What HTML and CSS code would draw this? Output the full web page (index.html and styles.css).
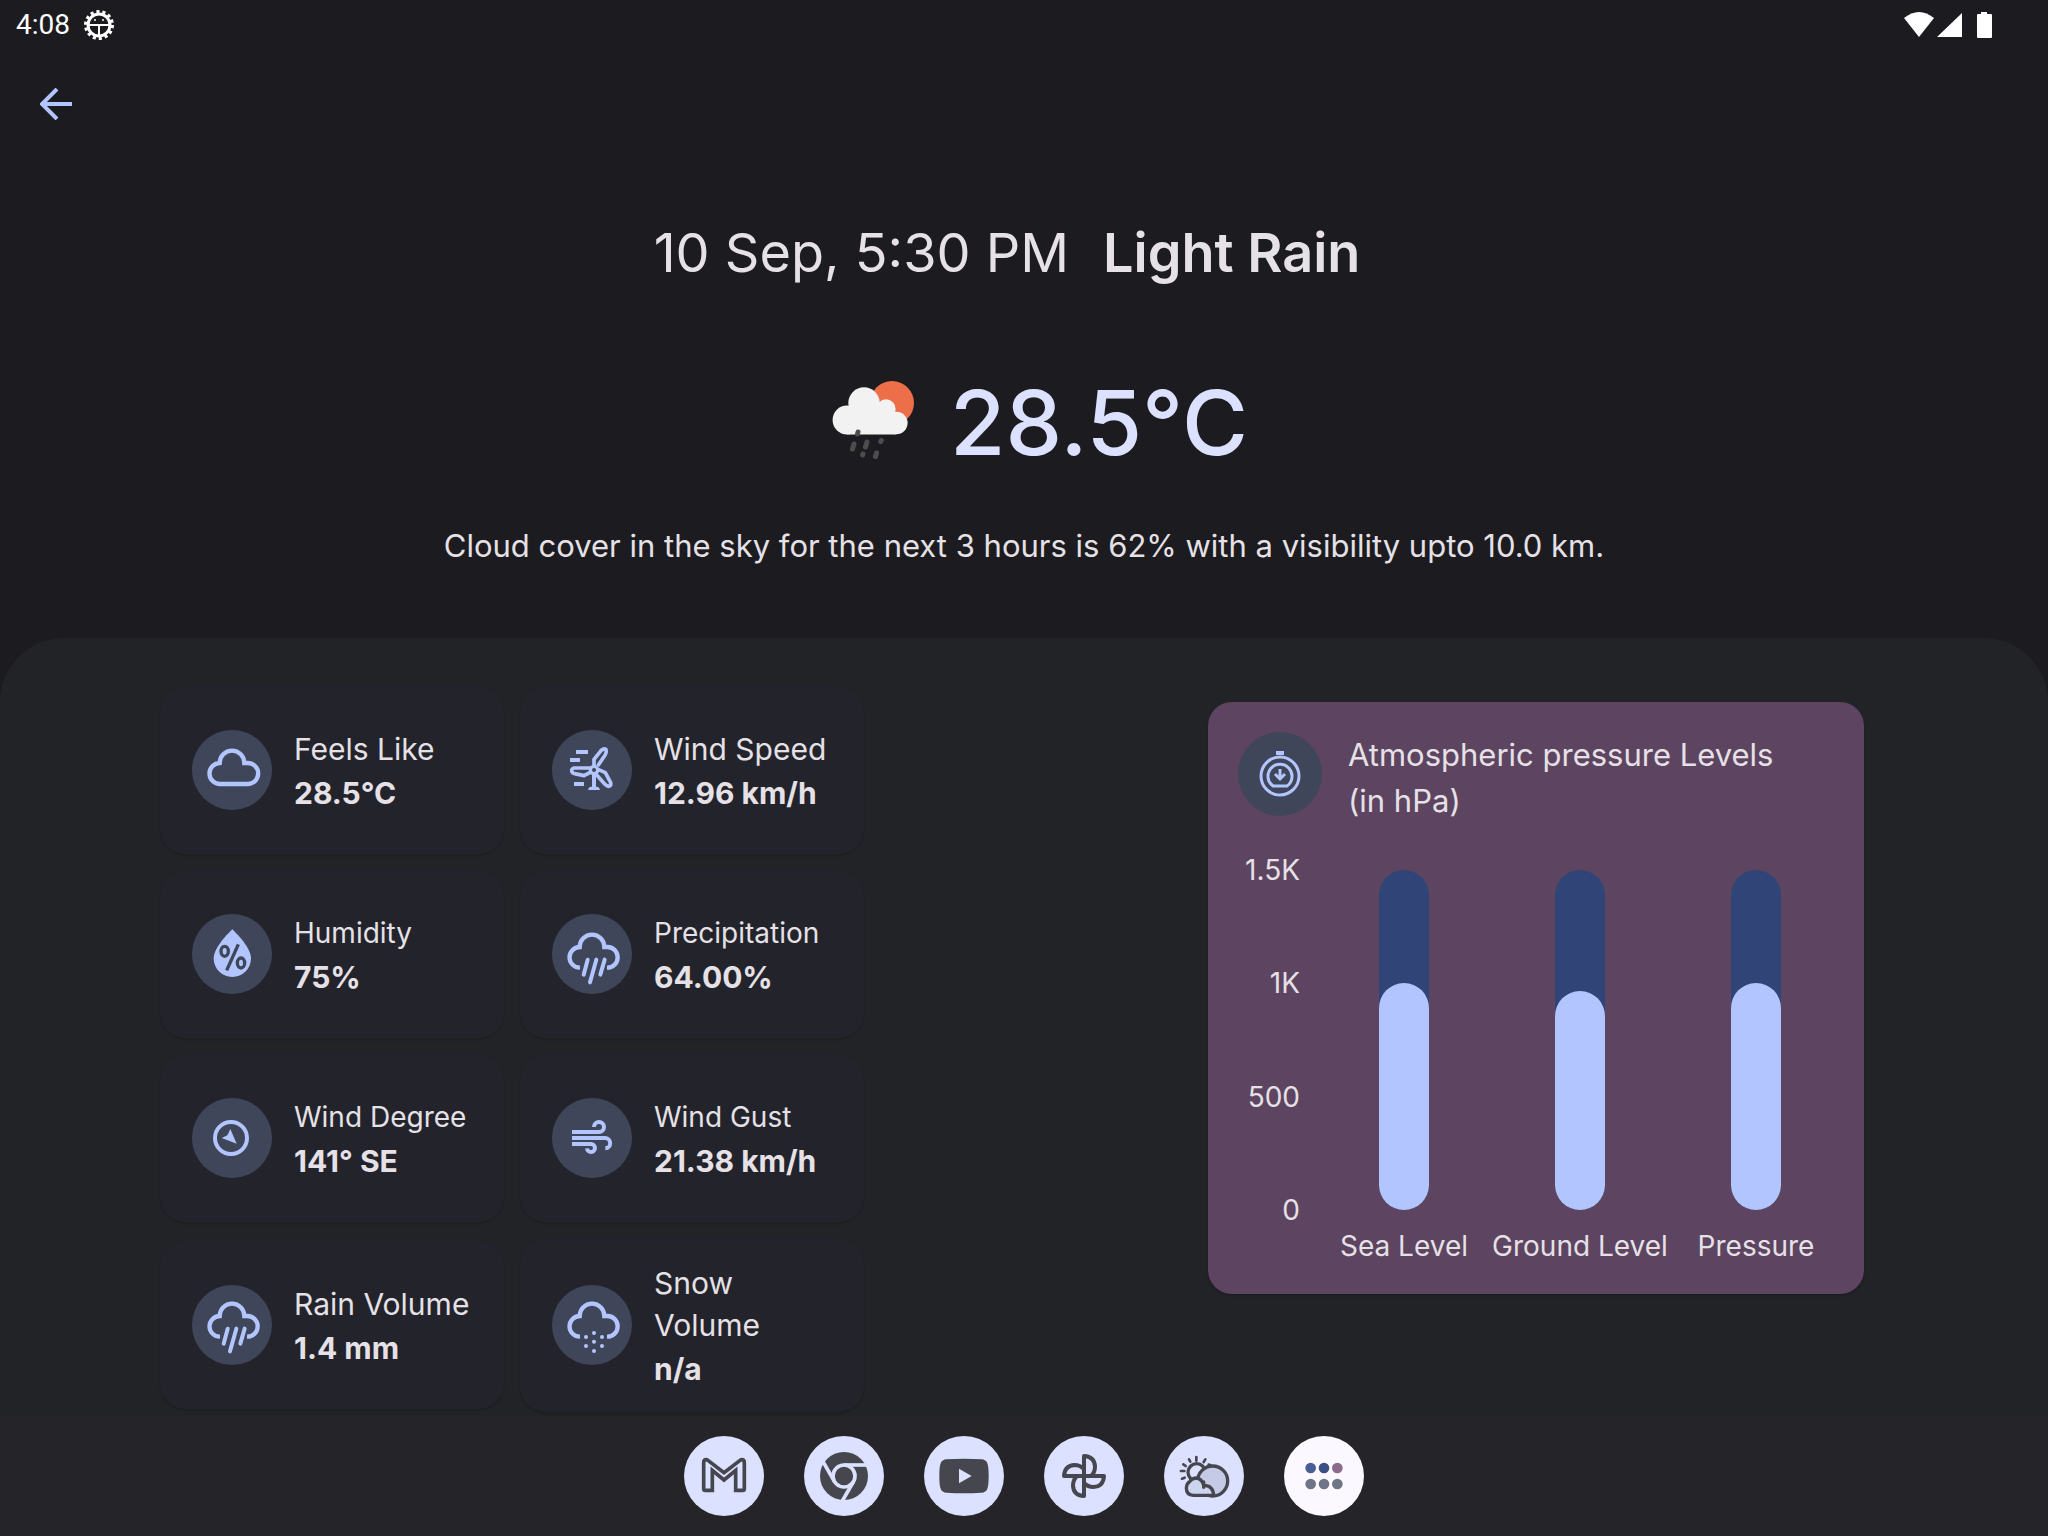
FILE: index.html
```html
<!DOCTYPE html>
<html lang="en">
<head>
<meta charset="utf-8">
<meta name="viewport" content="width=device-width, initial-scale=1">
<title>Light Rain</title>
<link rel="stylesheet" href="styles.css">
</head>
<body>
<svg class="defs" aria-hidden="true">
  <symbol id="cloud-open" viewBox="0 0 240 240">
    <path d="M84 161A31 31 0 0 1 83 99A37 37 0 0 1 157 99H167A31 31 0 0 1 165 161" fill="none" stroke="currentColor" stroke-width="13"/>
  </symbol>
  <symbol id="rain" viewBox="0 0 240 240">
    <use href="#cloud-open"/>
    <path d="M107 137L95 182M133 137L114 205M158 137L145 182" fill="none" stroke="currentColor" stroke-width="12" stroke-linecap="round"/>
  </symbol>
</svg>

<header class="status">
  <div class="status-left">
    <span class="clock">4:08</span>
    <svg class="debug" viewBox="0 0 32 32" width="32" height="32">
      <circle cx="16" cy="16" r="13" fill="none" stroke="#fff" stroke-width="4" stroke-dasharray="3 2.834"/>
      <circle cx="16" cy="16" r="11" fill="none" stroke="#fff" stroke-width="3"/>
      <path d="M5 16H27M16 16V27" stroke="#fff" stroke-width="2"/>
      <circle cx="12" cy="11" r="1" fill="#fff"/><circle cx="20" cy="11" r="1" fill="#fff"/>
    </svg>
  </div>
  <svg viewBox="0 0 90 28" width="90" height="28" aria-label="Wi-Fi, signal and battery">
    <path d="M1 7Q16 -5 31 7L16 26Z" fill="#fff"/>
    <path d="M34 26L59 2V26Z" fill="#fff"/>
    <path d="M78 1h6v2h4q1 0 1 1v22q0 1-1 1h-13q-1 0-1-1V4q0-1 1-1h3z" fill="#fff"/>
  </svg>
</header>

<nav class="toolbar">
  <button class="back" type="button" aria-label="Back">
    <svg viewBox="0 0 32 32" width="32" height="32"><path d="M17 1L2 16L17 31M2 16H32" fill="none" stroke="currentColor" stroke-width="4"/></svg>
  </button>
</nav>

<section class="hero">
  <h1 class="title"><span>10 Sep, 5:30 PM</span><strong>Light Rain</strong></h1>
  <div class="now">
    <svg class="weather" viewBox="0 0 84 80" width="84" height="80" aria-hidden="true">
      <circle cx="60" cy="23" r="22" fill="#ec6f4a"/>
      <g fill="#f2f2f2">
        <circle cx="15" cy="40" r="14.4"/><circle cx="32" cy="23" r="15.7"/><circle cx="54" cy="29" r="9.7"/><circle cx="64.3" cy="43" r="11.3"/>
        <path d="M15 54.4H64.3V34L32 23L15 36Z"/>
      </g>
      <path d="M26 52L25.500 54M22 64L20.500 69M35 62L33.500 67M49.300 60.500L48.700 61.500M31 74L30.700 75M44.500 73L43.500 76.500" stroke="#4d4d4d" stroke-width="5" stroke-linecap="round"/>
    </svg>
    <p class="temp">28.5°C</p>
  </div>
  <p class="summary">Cloud cover in the sky for the next 3 hours is 62% with a visibility upto 10.0 km.</p>
</section>

<main class="panel">
  <div class="metrics">
    <article class="card">
      <svg class="badge" viewBox="0 0 240 240"><path d="M85 162H167A31 31 0 0 0 167 99H157A37 37 0 0 0 83 99A31 31 0 0 0 85 162Z" fill="none" stroke="currentColor" stroke-width="13"/></svg>
      <div class="reading"><h2 class="label">Feels Like</h2><p class="value">28.5°C</p></div>
    </article>
    <article class="card">
      <svg class="badge" viewBox="0 0 240 240" fill="none" stroke="currentColor" stroke-width="11">
        <path d="M72 66H108M54 90H84M66 162H96" stroke-width="12"/>
        <circle cx="126" cy="120" r="11" stroke-width="10"/>
        <path d="M126 108V88L147 62Q156 53 162 59Q164 66 160 74L137 108M114 114H66Q59 116 59 122Q60 129 68 131L96 137L115 127M138 118L160 128L176 158Q178 167 170 169Q164 168 158 162L130 130" stroke-linejoin="round"/>
        <path d="M126 128V174" stroke-width="12"/>
        <path d="M108 180q2-10 10-10h16q8 0 10 10z" fill="currentColor" stroke="none"/>
      </svg>
      <div class="reading"><h2 class="label">Wind Speed</h2><p class="value">12.96 km/h</p></div>
    </article>
    <article class="card">
      <svg class="badge" viewBox="0 0 240 240">
        <path d="M121 46C121 46 65 98 65 133a56 56 0 0 0 112 0C177 98 121 46 121 46Z" fill="currentColor"/>
        <g fill="none" stroke="#404659" stroke-width="10"><ellipse cx="98" cy="112" rx="11" ry="15"/><ellipse cx="147" cy="147" rx="11" ry="15"/><path d="M139 91L104 169"/></g>
      </svg>
      <div class="reading"><h2 class="label small">Humidity</h2><p class="value">75%</p></div>
    </article>
    <article class="card">
      <svg class="badge" viewBox="0 0 240 240"><use href="#rain"/></svg>
      <div class="reading"><h2 class="label small">Precipitation</h2><p class="value">64.00%</p></div>
    </article>
    <article class="card">
      <svg class="badge" viewBox="0 0 240 240">
        <circle cx="117" cy="120" r="48" fill="none" stroke="currentColor" stroke-width="12"/>
        <path d="M115 93L134 137L89 120L106 112Z" fill="currentColor"/>
      </svg>
      <div class="reading"><h2 class="label small">Wind Degree</h2><p class="value">141° SE</p></div>
    </article>
    <article class="card">
      <svg class="badge" viewBox="0 0 240 240"><path d="M60 102H141A15 15 0 1 0 126 87M60 120H158A15 15 0 0 1 160 151M60 138H117A12 12 0 1 1 105 151" fill="none" stroke="currentColor" stroke-width="12"/></svg>
      <div class="reading"><h2 class="label small">Wind Gust</h2><p class="value">21.38 km/h</p></div>
    </article>
    <article class="card">
      <svg class="badge" viewBox="0 6 240 240"><use href="#rain" width="240" height="240"/></svg>
      <div class="reading"><h2 class="label">Rain Volume</h2><p class="value">1.4 mm</p></div>
    </article>
    <article class="card">
      <svg class="badge" viewBox="0 6 240 240">
        <use href="#cloud-open" width="240" height="240"/>
        <g fill="currentColor"><circle cx="102" cy="162" r="6"/><circle cx="126" cy="150" r="6"/><circle cx="150" cy="162" r="6"/><circle cx="126" cy="176" r="6"/><circle cx="102" cy="189" r="6"/><circle cx="150" cy="189" r="6"/><circle cx="126" cy="204" r="6"/></g>
      </svg>
      <div class="reading"><h2 class="label">Snow<br>Volume</h2><p class="value">n/a</p></div>
    </article>
  </div>

  <section class="chart-card">
    <div class="chart-head">
      <svg class="badge large" viewBox="0 0 84 84" fill="none" stroke="currentColor" stroke-width="3">
        <path d="M38 21H46" stroke-width="4"/>
        <circle cx="42" cy="44" r="19"/>
        <path d="M35 54A12 12 0 1 1 49 54Z" stroke-linejoin="round"/>
        <path d="M42 37V46M37 42L42 47L47 42"/>
      </svg>
      <h2 class="chart-title">Atmospheric pressure Levels (in hPa)</h2>
    </div>
    <div class="chart">
      <div class="axis"><span>1.5K</span><span>1K</span><span>500</span><span>0</span></div>
      <div class="series"><div class="bar"><div class="fill" style="height:66.8%"></div></div><span>Sea Level</span></div>
      <div class="series"><div class="bar"><div class="fill" style="height:64.4%"></div></div><span>Ground Level</span></div>
      <div class="series"><div class="bar"><div class="fill" style="height:66.8%"></div></div><span>Pressure</span></div>
    </div>
  </section>
</main>

<footer class="dock">
  <button class="app" type="button" aria-label="Gmail"><svg viewBox="0 0 240 240"><path d="M59 80Q59 71 67 71Q70 71 73 74L120 110L167 74Q170 71 173 71Q181 71 181 80V158q0 5-5 5H155V103L120 132L85 103V163H64q-5 0-5-5Z" fill="none" stroke="#46464f" stroke-width="11"/></svg></button>
  <button class="app" type="button" aria-label="Chrome"><svg viewBox="0 0 240 240"><circle cx="120" cy="120" r="72" fill="#46464f"/><g fill="none" stroke="#dbe1ff" stroke-width="11"><circle cx="120" cy="120" r="33"/><path d="M120 87H200"/><path d="M120 87H200" transform="rotate(120 120 120)"/><path d="M120 87H200" transform="rotate(240 120 120)"/></g></svg></button>
  <button class="app" type="button" aria-label="YouTube"><svg viewBox="0 0 240 240"><path d="M46 120Q46 92 50 82Q54 71 68 70Q120 67 172 70Q186 71 190 82Q194 92 194 120Q194 148 190 158Q186 169 172 170Q120 173 68 170Q54 169 50 158Q46 148 46 120Z" fill="#46464f"/><path d="M105 98L143 120L105 142Z" fill="#dbe1ff"/></svg></button>
  <button class="app" type="button" aria-label="Photos"><svg viewBox="0 0 240 240"><g fill="none" stroke="#46464f" stroke-width="12" stroke-linejoin="round"><path id="blade" d="M120 120V60Q152 62 153 92Q153 108 141 120"/><use href="#blade" transform="rotate(90 120 120)"/><use href="#blade" transform="rotate(180 120 120)"/><use href="#blade" transform="rotate(270 120 120)"/></g></svg></button>
  <button class="app" type="button" aria-label="Weather"><svg viewBox="0 0 240 240"><g stroke="#46464f" stroke-width="10" stroke-linecap="round" stroke-linejoin="round"><path d="M97 63V74M75 70L79 77M124 70L119 78M58 85L65 90M51 105H61M54 128L62 125M134 86L139 87" fill="none" stroke-width="8"/><circle cx="98" cy="109" r="26" fill="#dbe1ff"/><circle cx="146" cy="135" r="45" fill="#c5cae6"/><path d="M88 178Q67 177 67 156Q68 142 76 138Q82 127 96 126Q114 128 119 148Q147 148 149 178Z" fill="#ccd4f0"/><path d="M119 138V154" fill="none"/></g></svg></button>
  <button class="app all" type="button" aria-label="All apps"><svg viewBox="0 0 240 240"><circle cx="80" cy="96" r="16" fill="#4a5e96"/><circle cx="120" cy="96" r="16" fill="#3c5086"/><circle cx="160" cy="96" r="16" fill="#8b6a8a"/><g fill="#6f7586"><circle cx="80" cy="144" r="16"/><circle cx="120" cy="144" r="16"/><circle cx="160" cy="144" r="16"/></g></svg></button>
</footer>
</body>
</html>
```
FILE: styles.css
```css
* { box-sizing: border-box; }
body {
  margin: 0;
  min-height: 100vh;
  display: flex;
  flex-direction: column;
  background: #1c1b1f;
  color: #e5e1e6;
  font-family: Inter, "Liberation Sans", sans-serif;
}
h1, h2, p { margin: 0; font-weight: 400; }
button { border: 0; padding: 0; cursor: pointer; }
.defs { position: absolute; width: 0; height: 0; }

.status {
  display: flex;
  justify-content: space-between;
  align-items: center;
  height: 50px;
  padding: 0 55px 0 16px;
  color: #fff;
}
.status-left { display: flex; align-items: center; gap: 13px; }
.clock { font: 28px/48px Roboto, sans-serif; }

.toolbar { height: 110px; padding: 22px 24px; }
.back {
  display: grid;
  place-items: center;
  width: 64px;
  height: 64px;
  background: none;
  color: #b2c5ff;
}

.hero {
  display: flex;
  flex-direction: column;
  align-items: center;
  padding: 57px 24px 70px;
  text-align: center;
}
.title {
  display: flex;
  flex-wrap: wrap;
  justify-content: center;
  gap: 34px;
  margin-right: 34px;
  font-size: 54px;
  line-height: 72px;
}
.title strong { font-weight: 600; }
.now {
  display: flex;
  align-items: center;
  gap: 34px;
  margin: 74px 0 41px;
  padding-left: 32px;
}
.weather { margin-bottom: 6px; }
.temp { font-size: 90px; line-height: 120px; font-weight: 500; color: #dbe1ff; }
.summary { font-size: 31px; line-height: 44px; }

.panel {
  flex: 1;
  display: grid;
  grid-template-columns: 1fr 1fr;
  align-items: start;
  justify-items: center;
  padding: 48px 0 4px;
  background: #222327;
  border-radius: 64px 64px 0 0;
}
.metrics {
  display: grid;
  grid-template-columns: 1fr 1fr;
  align-items: center;
  gap: 16px;
  width: 100%;
  max-width: 704px;
}
.card {
  display: flex;
  align-items: center;
  gap: 22px;
  min-height: 168px;
  padding: 20px 32px;
  background: #23232b;
  border-radius: 26px;
  box-shadow: 0 2px 2px rgba(0, 0, 0, .15);
}
.badge {
  flex: none;
  width: 80px;
  height: 80px;
  border-radius: 50%;
  background: #404659;
  color: #b2c5ff;
}
.badge.large { width: 84px; height: 84px; }
.reading { padding-top: 4px; }
.label { font-size: 30px; line-height: 42px; }
.label.small { font-size: 28px; }
.value { font-size: 30px; line-height: 46px; font-weight: 700; }

.chart-card {
  width: 100%;
  max-width: 656px;
  margin-top: 16px;
  padding: 30px 20px 30px 30px;
  background: #5d4460;
  border-radius: 24px;
  box-shadow: 0 2px 2px rgba(0, 0, 0, .15);
}
.chart-head { display: flex; align-items: flex-start; gap: 26px; }
.chart-title { font-size: 31px; line-height: 46px; max-width: 440px; }
.chart {
  display: grid;
  grid-template-columns: 78px repeat(3, 1fr);
  margin-top: 46px;
  font-size: 28px;
  line-height: 36px;
}
.axis {
  display: flex;
  flex-direction: column;
  justify-content: space-between;
  height: 376px;
  margin-top: -18px;
  padding-right: 16px;
  text-align: right;
}
.series { display: flex; flex-direction: column; align-items: center; gap: 18px; white-space: nowrap; }
.bar {
  display: flex;
  align-items: flex-end;
  width: 50px;
  height: 340px;
  border-radius: 25px;
  background: #304478;
}
.fill { width: 100%; border-radius: 25px; background: #b2c5ff; }

.dock {
  display: flex;
  justify-content: center;
  gap: 40px;
  padding: 20px;
  background: #252428;
}
.app {
  width: 80px;
  height: 80px;
  border-radius: 50%;
  background: #dbe1ff;
}
.app svg { display: block; width: 80px; height: 80px; }
.app.all { background: #fbf8ff; }
```
